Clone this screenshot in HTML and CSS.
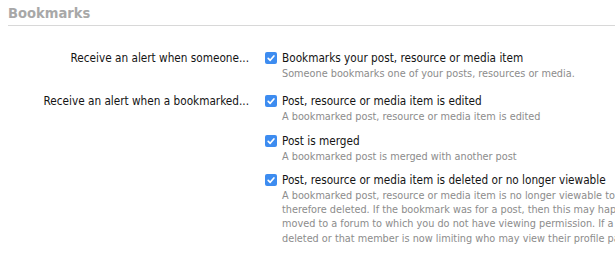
FILE: index.html
```html
<!DOCTYPE html>
<html>
<head>
<meta charset="utf-8">
<link rel="stylesheet" href="styles.css">
</head>
<body>
<div class="block">
  <h2 class="block-header">Bookmarks</h2>
  <div class="rows">
    <div class="row">
      <div class="row-label">Receive an alert when someone...</div>
      <ul class="choices">
        <li class="choice">
          <label class="check"><span class="box"><svg viewBox="0 0 12 12" width="12" height="12"><path d="M3.2 6.3 L5.2 8.3 L8.9 4" fill="none" stroke="#fff" stroke-width="1.7" stroke-linecap="round" stroke-linejoin="round"/></svg></span><span class="check-text">Bookmarks your post, resource or media item</span></label>
          <div class="hint">Someone bookmarks one of your posts, resources or media.</div>
        </li>
      </ul>
    </div>
    <div class="row">
      <div class="row-label">Receive an alert when a bookmarked...</div>
      <ul class="choices">
        <li class="choice">
          <label class="check"><span class="box"><svg viewBox="0 0 12 12" width="12" height="12"><path d="M3.2 6.3 L5.2 8.3 L8.9 4" fill="none" stroke="#fff" stroke-width="1.7" stroke-linecap="round" stroke-linejoin="round"/></svg></span><span class="check-text">Post, resource or media item is edited</span></label>
          <div class="hint">A bookmarked post, resource or media item is edited</div>
        </li>
        <li class="choice">
          <label class="check"><span class="box"><svg viewBox="0 0 12 12" width="12" height="12"><path d="M3.2 6.3 L5.2 8.3 L8.9 4" fill="none" stroke="#fff" stroke-width="1.7" stroke-linecap="round" stroke-linejoin="round"/></svg></span><span class="check-text">Post is merged</span></label>
          <div class="hint">A bookmarked post is merged with another post</div>
        </li>
        <li class="choice">
          <label class="check"><span class="box"><svg viewBox="0 0 12 12" width="12" height="12"><path d="M3.2 6.3 L5.2 8.3 L8.9 4" fill="none" stroke="#fff" stroke-width="1.7" stroke-linecap="round" stroke-linejoin="round"/></svg></span><span class="check-text">Post, resource or media item is deleted or no longer viewable</span></label>
          <div class="hint wide">A bookmarked post, resource or media item is no longer viewable to you and is<br>therefore deleted. If the bookmark was for a post, then this may happen if the thread was<br>moved to a forum to which you do not have viewing permission. If a profile post, it was<br>deleted or that member is now limiting who may view their profile page.</div>
        </li>
      </ul>
    </div>
  </div>
</div>
</body>
</html>
```

FILE: styles.css
```css
html, body {
  margin: 0;
  padding: 0;
  background: #fff;
  overflow: hidden;
}
body {
  font-family: "DejaVu Sans Condensed", "DejaVu Sans", sans-serif;
  color: #141414;
  width: 615px;
  height: 262px;
}
.block {
  padding: 0 0 0 8px;
}
.block-header {
  margin: 0;
  padding: 5px 0 4px;
  font-size: 14.6px;
  font-weight: bold;
  color: #a8a8a8;
  border-bottom: 1px solid #d8d8d8;
  line-height: 16px;
}
.rows {
  padding-top: 24px;
}
.row {
  display: flex;
  margin-bottom: 4px;
}
.row-label {
  width: 241px;
  flex: none;
  text-align: right;
  font-size: 11.7px;
  line-height: 16px;
  color: #141414;
  padding-right: 16px;
}
.choices {
  list-style: none;
  margin: 0;
  padding: 0;
  flex: 1;
  min-width: 0;
}
.choice {
  margin-bottom: 8px;
}
.check {
  display: flex;
  align-items: center;
  font-size: 11.7px;
  line-height: 16px;
  white-space: nowrap;
}
.box {
  width: 12px;
  height: 12px;
  border-radius: 2px;
  background: #3d8cf0;
  flex: none;
  margin-right: 5px;
  display: flex;
}
.hint {
  padding-left: 17px;
  font-size: 10.8px;
  line-height: 14.3px;
  color: #8c8c8c;
  margin-top: 1px;
  white-space: nowrap;
}
```
